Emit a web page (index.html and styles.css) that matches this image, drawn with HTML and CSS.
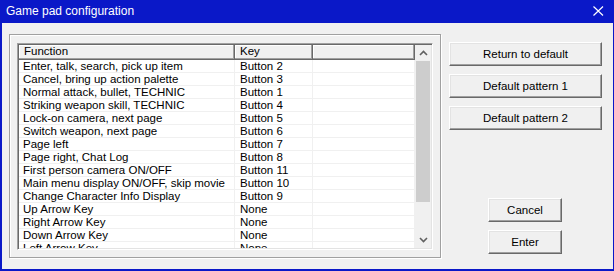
FILE: index.html
```html
<!DOCTYPE html>
<html>
<head>
<meta charset="UTF-8" />
<title>Game pad configuration</title>
<link rel="stylesheet" href="styles.css">
</head>
<body>

<div class="window">
    <div class="titlebar">
        <span class="title">Game pad configuration</span>
        <svg class="close" width="11" height="10" viewBox="0 0 11 10"><path d="M0.5 0.5 L10 9.5 M10 0.5 L0.5 9.5" stroke="#fff" stroke-width="1.2" fill="none"/></svg>
    </div>

    <div class="client">
        <div class="group">
            <div class="list">
                <div class="view">
                    <div class="head">
                        <div class="cell c1">Function</div>
                        <div class="cell c2">Key</div>
                        <div class="cell c3"></div>
                    </div>
                    <div class="rows">
                        <div class="row"><div class="cell c1">Enter, talk, search, pick up item</div><div class="cell c2">Button 2</div><div class="cell c3"></div></div>
                        <div class="row"><div class="cell c1">Cancel, bring up action palette</div><div class="cell c2">Button 3</div><div class="cell c3"></div></div>
                        <div class="row"><div class="cell c1">Normal attack, bullet, TECHNIC</div><div class="cell c2">Button 1</div><div class="cell c3"></div></div>
                        <div class="row"><div class="cell c1">Striking weapon skill, TECHNIC</div><div class="cell c2">Button 4</div><div class="cell c3"></div></div>
                        <div class="row"><div class="cell c1">Lock-on camera, next page</div><div class="cell c2">Button 5</div><div class="cell c3"></div></div>
                        <div class="row"><div class="cell c1">Switch weapon, next page</div><div class="cell c2">Button 6</div><div class="cell c3"></div></div>
                        <div class="row"><div class="cell c1">Page left</div><div class="cell c2">Button 7</div><div class="cell c3"></div></div>
                        <div class="row"><div class="cell c1">Page right, Chat Log</div><div class="cell c2">Button 8</div><div class="cell c3"></div></div>
                        <div class="row"><div class="cell c1">First person camera ON/OFF</div><div class="cell c2">Button 11</div><div class="cell c3"></div></div>
                        <div class="row"><div class="cell c1">Main menu display ON/OFF, skip movie</div><div class="cell c2">Button 10</div><div class="cell c3"></div></div>
                        <div class="row"><div class="cell c1">Change Character Info Display</div><div class="cell c2">Button 9</div><div class="cell c3"></div></div>
                        <div class="row"><div class="cell c1">Up Arrow Key</div><div class="cell c2">None</div><div class="cell c3"></div></div>
                        <div class="row"><div class="cell c1">Right Arrow Key</div><div class="cell c2">None</div><div class="cell c3"></div></div>
                        <div class="row"><div class="cell c1">Down Arrow Key</div><div class="cell c2">None</div><div class="cell c3"></div></div>
                        <div class="row"><div class="cell c1">Left Arrow Key</div><div class="cell c2">None</div><div class="cell c3"></div></div>
                    </div>
                </div>
                <div class="scroll">
                    <div class="arrow"><svg width="9" height="6" viewBox="0 0 9 6"><path d="M1 5 L4.5 1.5 L8 5" stroke="#606060" stroke-width="1.6" fill="none"/></svg></div>
                    <div class="track"><div class="thumb"></div></div>
                    <div class="arrow"><svg width="9" height="6" viewBox="0 0 9 6"><path d="M1 1 L4.5 4.5 L8 1" stroke="#606060" stroke-width="1.6" fill="none"/></svg></div>
                </div>
            </div>
        </div>

        <div class="side">
            <button class="btn wide">Return to default</button>
            <button class="btn wide">Default pattern 1</button>
            <button class="btn wide">Default pattern 2</button>
            <button class="btn small cancel">Cancel</button>
            <button class="btn small">Enter</button>
        </div>
    </div>
</div>

</body>
</html>
```

FILE: styles.css
```css
html,body {
    margin: 0; padding: 0;
    width: 614px; height: 271px; overflow: hidden;
    font-family: "Liberation Sans", Arial, sans-serif; font-size: 11.5px;
    background: #F0F0F0; color: #000;
}

.window {
    width: 614px; height: 271px; box-sizing: border-box;
    border: 2px solid #0A18C8; border-top: 0; border-right-width: 1px;
    display: flex; flex-direction: column;
}

.titlebar {
    height: 23px; margin: 0 -1px 0 -2px; padding: 0 10px 0 6px;
    background: #0A18C8; color: #FFF;
    display: flex; align-items: center; justify-content: space-between;
}
    .titlebar .title { font-size: 12px; padding-bottom: 2px; }
    .titlebar .close { margin-bottom: 2px; }

.client { flex: 1; display: flex; background: #F0F0F0; }

.group {
    width: 432px; height: 224px; box-sizing: border-box;
    margin: 11px 0 0 7px; padding: 8px 8px 0 7px;
    border: 1px solid #A0A0A0; box-shadow: 1px 1px 0 #FFF, inset 1px 1px 0 #FFF;
}

.list {
    width: 416px; height: 207px; box-sizing: border-box;
    border: 1px solid; border-color: #A0A0A0 #FFF #FFF #A0A0A0;
    box-shadow: inset 1px 1px 0 #696969, inset -1px -1px 0 #E3E3E3;
    padding: 1px; background: #FFF;
    display: flex; overflow: hidden;
}
    .view { width: 396px; overflow: hidden; }

    .head { display: flex; height: 15px; background: #F0F0F0; }
    .head .cell {
        box-sizing: border-box; height: 15px; line-height: 13px; padding-left: 5px;
        border-right: 1px solid #696969; border-bottom: 1px solid #696969;
        box-shadow: inset -1px -1px 0 #A0A0A0, inset 1px 1px 0 #FFF;
    }

    .row { display: flex; height: 13px; }
    .row .cell {
        box-sizing: border-box; height: 13px; line-height: 12px; padding-left: 4px;
        border-right: 1px solid #F0F0F0; border-bottom: 1px solid #F0F0F0;
        white-space: nowrap; overflow: hidden;
    }
    .row .c2 { padding-left: 5px; }

    .c1 { width: 216px; }
    .c2 { width: 78px; }
    .c3 { width: 102px; }

.scroll { width: 16px; display: flex; flex-direction: column; background: #F0F0F0; }
    .scroll .arrow { height: 16px; display: flex; align-items: center; justify-content: center; }
    .scroll .track { flex: 1; padding: 0 1px; }
    .scroll .thumb { height: 141px; background: #CDCDCD; }

.side { display: flex; flex-direction: column; gap: 8px; margin: 19px 0 0 8px; }

.btn {
    font-family: "Liberation Sans", Arial, sans-serif; font-size: 11.5px; color: #000;
    height: 24px; padding: 0; box-sizing: border-box;
    background: #F0F0F0; border: 1px solid; border-color: #FFF #696969 #696969 #FFF;
    box-shadow: inset -1px -1px 0 #A0A0A0, inset 1px 1px 0 #E3E3E3;
}
    .btn.wide  { width: 153px; }
    .btn.small { width: 74px; margin-left: 39px; }
    .btn.cancel { margin-top: 60px; }
```
